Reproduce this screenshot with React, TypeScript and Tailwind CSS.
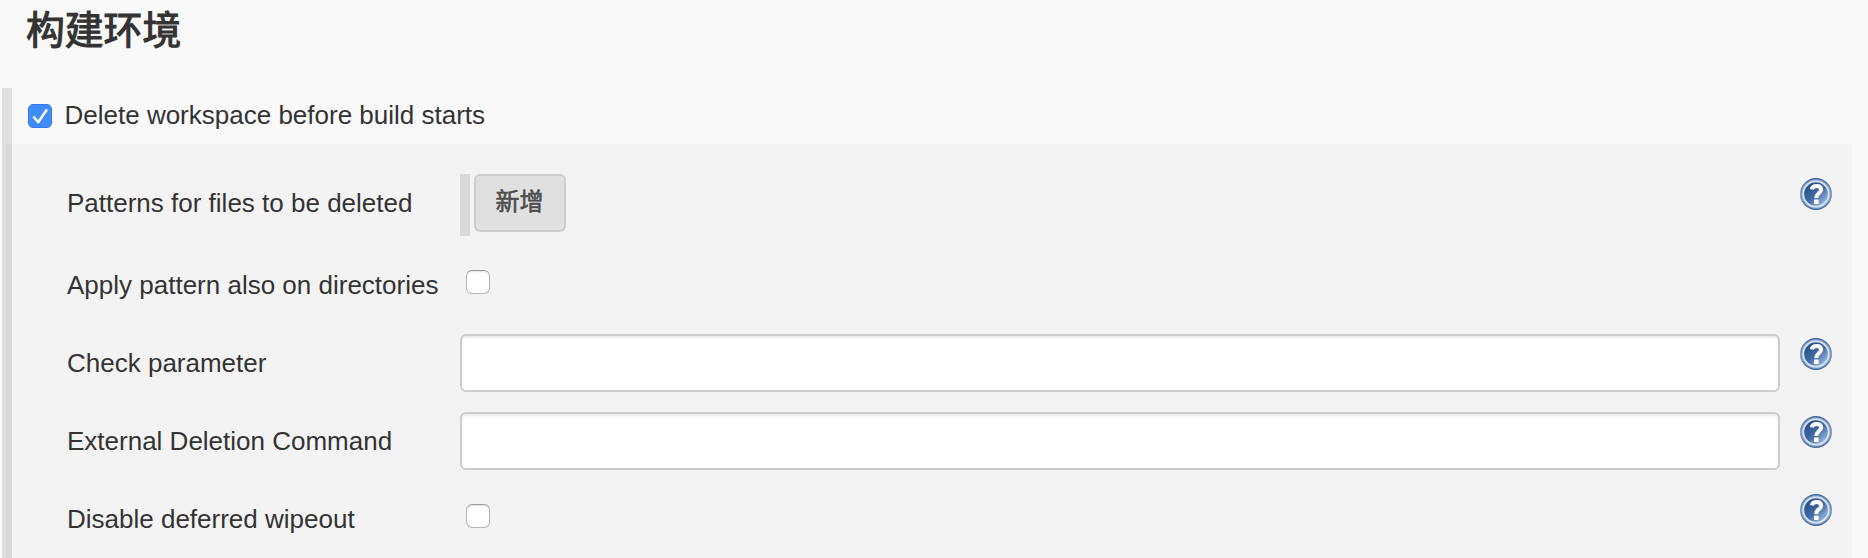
import type { ReactNode } from "react";

function HelpIcon() {
  return (
    <svg width="32" height="32" viewBox="0 0 32 32" className="block">
      <defs>
        <linearGradient id="disc" x1="0.1" y1="0.1" x2="0.9" y2="0.95">
          <stop offset="0" stopColor="#274d89" />
          <stop offset="0.5" stopColor="#426aa4" />
          <stop offset="1" stopColor="#a3bfe2" />
        </linearGradient>
        <linearGradient id="rim" x1="0" y1="0" x2="0" y2="1">
          <stop offset="0" stopColor="#44699f" />
          <stop offset="0.5" stopColor="#7b98c1" />
          <stop offset="1" stopColor="#44699f" />
        </linearGradient>
      </defs>
      <circle cx="16" cy="16" r="16" fill="url(#rim)" />
      <circle cx="16" cy="16" r="14.6" fill="#93abce" />
      <circle cx="16" cy="16" r="13.5" fill="#dae4f1" />
      <circle cx="16" cy="16" r="11.8" fill="url(#disc)" />
      <path
        d="M11.8 11.4C12.3 8.9 14.3 8 16.6 8c2.8 0 4.5 1.4 4.5 3.7 0 3.4-4.7 3.8-4.7 7.4v.9"
        fill="none"
        stroke="#fff"
        strokeWidth="4"
      />
      <rect x="14" y="21.6" width="4.6" height="4.3" rx="0.6" fill="#fff" />
    </svg>
  );
}

function Checkbox({ checked = false }: { checked?: boolean }) {
  if (checked) {
    return (
      <span className="block h-6 w-6 shrink-0 rounded-[5px] border border-[#327bea] bg-[#418bf7]">
        <svg width="22" height="22" viewBox="0 0 22 22" className="block">
          <path
            d="M5 12.2l4.2 5L17.4 5.2"
            fill="none"
            stroke="#fff"
            strokeWidth="2.5"
            strokeLinecap="round"
            strokeLinejoin="round"
          />
        </svg>
      </span>
    );
  }
  return (
    <span className="block h-6 w-6 shrink-0 rounded-[6px] border border-[#b4b4b4] border-t-[#9b9b9b] bg-white shadow-[inset_0_2px_2px_-1px_#dedede]" />
  );
}

function TextField() {
  return (
    <input
      type="text"
      className="block h-[58px] w-full rounded-[6px] border-2 border-[#cccccc] bg-white px-3 shadow-[inset_0_2px_2px_#ececec] outline-none"
    />
  );
}

function Row({
  label,
  help = false,
  className = "h-[78px]",
  children,
}: {
  label: string;
  help?: boolean;
  className?: string;
  children: ReactNode;
}) {
  return (
    <div className={`flex shrink-0 items-start ${className}`}>
      <div className="w-[393px] shrink-0 whitespace-nowrap pt-6">{label}</div>
      <div className="w-[1320px] shrink-0 pt-[10px]">{children}</div>
      <div className="pl-5 pt-[14px]">{help && <HelpIcon />}</div>
    </div>
  );
}

export default function App() {
  return (
    <main className="flex h-[558px] w-[1868px] flex-col overflow-hidden bg-[#f9f9f9] font-['Liberation_Sans','Noto_Sans_CJK_SC',sans-serif] text-[26px] leading-[30px] text-[#333333]">
      <h1 className="h-[88px] shrink-0 pl-[26px] font-['Noto_Sans_CJK_SC',sans-serif] text-[38.8px] font-normal leading-[54px] [-webkit-text-stroke:1.1px_#333333]">
        构建环境
      </h1>
      <section className="ml-[2px] flex flex-1 flex-col">
        <label className="flex h-14 shrink-0 items-start border-l-[10px] border-[#e0e0e0] pl-4 pt-4">
          <Checkbox checked />
          <span className="-mt-[4px] pl-[12.5px]">Delete workspace before build starts</span>
        </label>
        <div className="flex flex-1">
          <div className="w-1 bg-[#e0e0e0]" />
          <div className="w-[1846px] border-l-[6px] border-[#d9d9d9] bg-[#f3f3f3] pl-[55px] pt-5">
            <Row label="Patterns for files to be deleted" help className="h-[82px]">
              <div className="flex h-[62px] items-start gap-1 border-l-[10px] border-[#d9d9d9] pl-1">
                <button className="h-[58px] w-[92px] rounded-[6px] border-2 border-[#cccccc] bg-[#e0e0e0] pb-[6px] pr-[1px] font-['Noto_Sans_CJK_SC',sans-serif] text-2xl font-normal leading-none text-[#4d4d4d] [-webkit-text-stroke:0.6px_#4d4d4d]">
                  新增
                </button>
              </div>
            </Row>
            <Row label="Apply pattern also on directories">
              <div className="pl-[6px] pt-[14px]">
                <Checkbox />
              </div>
            </Row>
            <Row label="Check parameter" help>
              <TextField />
            </Row>
            <Row label="External Deletion Command" help>
              <TextField />
            </Row>
            <Row label="Disable deferred wipeout" help>
              <div className="pl-[6px] pt-[14px]">
                <Checkbox />
              </div>
            </Row>
          </div>
        </div>
      </section>
    </main>
  );
}
